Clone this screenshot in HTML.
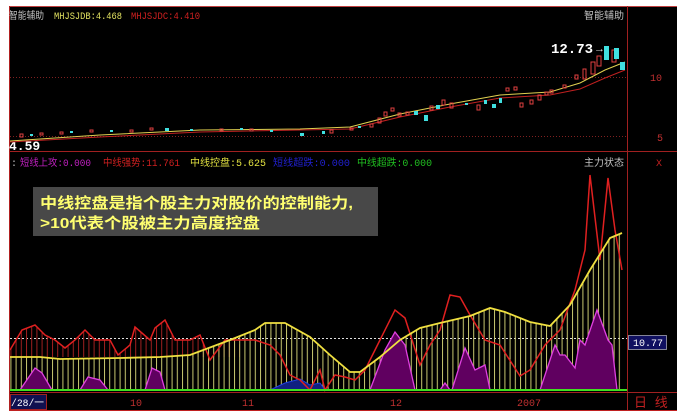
<!DOCTYPE html><html><head><meta charset="utf-8"><style>
body{margin:0;width:677px;height:417px;background:#fff;overflow:hidden;font-family:"Liberation Sans","Noto Sans CJK SC",sans-serif}
</style></head><body>
<svg width="677" height="417" xmlns="http://www.w3.org/2000/svg" style="position:absolute;left:0;top:0">
<defs><pattern id="vs" width="5.2" height="10" patternUnits="userSpaceOnUse"><rect x="0" y="0" width="1" height="10" fill="#c8c870"/></pattern>
<pattern id="rs" width="5.2" height="10" patternUnits="userSpaceOnUse"><rect x="0" y="0" width="1" height="10" fill="#a02020"/></pattern></defs>
<rect x="0" y="0" width="677" height="417" fill="#fff"/>
<rect x="9" y="6" width="668" height="405" fill="#000"/>
<line x1="9" y1="6.5" x2="677" y2="6.5" stroke="#c04040"/>
<line x1="9.5" y1="6" x2="9.5" y2="411" stroke="#b02020"/>
<line x1="627.5" y1="6" x2="627.5" y2="411" stroke="#a02020"/>
<line x1="9" y1="151.5" x2="677" y2="151.5" stroke="#a02020"/>
<line x1="9" y1="392.5" x2="677" y2="392.5" stroke="#a02020"/>
<line x1="9" y1="410.5" x2="677" y2="410.5" stroke="#c02020"/>
<line x1="10" y1="77.5" x2="627" y2="77.5" stroke="#802020" stroke-dasharray="1,2"/>
<line x1="10" y1="136.5" x2="627" y2="136.5" stroke="#802020" stroke-dasharray="1,2"/>
<g font-size="10" font-family="Liberation Mono,Noto Sans CJK SC,monospace" lengthAdjust="spacingAndGlyphs">
<text x="9" y="19" fill="#c0c0c0" textLength="35" lengthAdjust="spacingAndGlyphs">智能辅助</text>
<text x="54" y="19" fill="#e0e060" textLength="68" lengthAdjust="spacingAndGlyphs">MHJSJDB:4.468</text>
<text x="131" y="19" fill="#d02020" textLength="69" lengthAdjust="spacingAndGlyphs">MHJSJDC:4.410</text>
<text x="584" y="19" fill="#c0c0c0" textLength="40" lengthAdjust="spacingAndGlyphs">智能辅助</text>
<text x="650" y="81" fill="#c03030">10</text>
<text x="657" y="141" fill="#c03030">5</text>
<text x="11" y="166" fill="#c0c0c0">:</text>
<text x="20" y="166" fill="#c020c0" textLength="71" lengthAdjust="spacingAndGlyphs">短线上攻:0.000</text>
<text x="103" y="166" fill="#d02020" textLength="77" lengthAdjust="spacingAndGlyphs">中线强势:11.761</text>
<text x="190" y="166" fill="#e0e040" textLength="76" lengthAdjust="spacingAndGlyphs">中线控盘:5.625</text>
<text x="273" y="166" fill="#2020d0" textLength="77" lengthAdjust="spacingAndGlyphs">短线超跌:0.000</text>
<text x="357" y="166" fill="#20c020" textLength="75" lengthAdjust="spacingAndGlyphs">中线超跌:0.000</text>
<text x="584" y="166" fill="#c0c0c0" textLength="40" lengthAdjust="spacingAndGlyphs">主力状态</text>
<text x="656" y="166" fill="#c02020">X</text>
</g>
<text x="551" y="53" fill="#fff" font-size="14" font-family="Liberation Mono,monospace" font-weight="bold">12.73</text>
<text x="594" y="52" fill="#ddd" font-size="11">→</text>
<text x="9" y="150" fill="#fff" font-size="13" font-family="Liberation Mono,monospace" font-weight="bold">4.59</text>
<polyline fill="none" stroke="#e0d050" stroke-width="1" points="10,141 100,135 200,130 300,129 350,127 400,114 450,104 500,95 550,92 580,83 605,70 625,62"/>
<polyline fill="none" stroke="#c02020" stroke-width="1" points="10,142 100,137 200,132 300,130 350,129 400,117 450,107 500,98 550,95 580,89 605,78 625,70"/>
<g fill="none" stroke="#e04040">
<rect x="20" y="134" width="3" height="3"/><rect x="40" y="133" width="3" height="2"/><rect x="60" y="132" width="3" height="2"/><rect x="90" y="130" width="3" height="2"/><rect x="130" y="130" width="3" height="2"/><rect x="150" y="128" width="3" height="2"/><rect x="220" y="129" width="3" height="2"/><rect x="250" y="129" width="3" height="2"/><rect x="330" y="130" width="3" height="3"/><rect x="350" y="128" width="3" height="2"/><rect x="370" y="124" width="3" height="3"/><rect x="378" y="118" width="3" height="5"/><rect x="384" y="112" width="3" height="4"/><rect x="391" y="108" width="3" height="3"/><rect x="398" y="113" width="3" height="3"/><rect x="406" y="112" width="3" height="3"/><rect x="430" y="106" width="3" height="4"/><rect x="442" y="100" width="3" height="5"/><rect x="450" y="103" width="3" height="5"/><rect x="477" y="105" width="3" height="5"/><rect x="520" y="103" width="3" height="4"/><rect x="530" y="100" width="3" height="4"/><rect x="538" y="95" width="3" height="5"/><rect x="545" y="92" width="3" height="3"/><rect x="550" y="90" width="3" height="3"/><rect x="563" y="85" width="3" height="3"/><rect x="575" y="75" width="3" height="4"/><rect x="583" y="69" width="3" height="10"/><rect x="591" y="62" width="4" height="12"/><rect x="597" y="56" width="4" height="10"/><rect x="612" y="50" width="4" height="12"/><rect x="506" y="88" width="3" height="3"/><rect x="514" y="87" width="3" height="3"/>
</g>
<g fill="#40e0e0">
<rect x="30" y="134" width="3" height="2"/><rect x="70" y="131" width="3" height="2"/><rect x="110" y="130" width="3" height="2"/><rect x="165" y="128" width="4" height="3"/><rect x="190" y="129" width="3" height="2"/><rect x="240" y="128" width="3" height="2"/><rect x="270" y="130" width="3" height="2"/><rect x="300" y="133" width="4" height="3"/><rect x="322" y="131" width="3" height="3"/><rect x="358" y="126" width="3" height="2"/><rect x="414" y="111" width="4" height="4"/><rect x="424" y="115" width="4" height="6"/><rect x="436" y="105" width="4" height="4"/><rect x="465" y="103" width="3" height="2"/><rect x="484" y="100" width="3" height="4"/><rect x="492" y="104" width="4" height="4"/><rect x="604" y="46" width="5" height="14"/><rect x="614" y="48" width="5" height="11"/><rect x="620" y="62" width="5" height="8"/><rect x="499" y="98" width="3" height="5"/>
</g>
<line x1="10" y1="338.5" x2="627" y2="338.5" stroke="#e0e0e0" stroke-dasharray="2,2"/>
<polygon fill="url(#rs)" points="10,357 10,350 22,330 35,325 45,335 55,340 65,348 75,340 85,330 95,340 110,340 118,355 130,345 135,327 150,340 155,328 165,320 175,340 190,340 200,335 210,360 225,340 235,340 240,345 240,357"/>
<polygon fill="url(#vs)" points="10,390 10,357 40,357 60,359 120,358 160,357 190,355 230,340 255,330 265,323 285,323 310,337 330,355 350,372 360,372 380,357 400,340 420,328 440,323 470,316 490,308 505,312 530,322 550,326 570,305 590,270 610,238 622,233 622,390"/>
<g fill="#600060" stroke="#e040e0" stroke-width="1.3">
<polyline points="20,390 35,368 42,373 52,390"/><polyline points="80,390 88,377 100,380 108,390"/><polyline points="145,390 152,368 160,372 165,390"/><polyline points="370,390 385,350 395,332 405,345 415,390"/><polyline points="440,390 445,383 450,390"/><polyline points="452,390 465,348 475,370 485,365 490,390"/><polyline points="540,390 555,345 560,355 565,355 575,368 580,340 585,345 597,310 608,340 612,345 617,390"/>
</g>
<polyline fill="#102080" stroke="#2040e0" points="270,390 285,383 300,379 310,385 320,383 325,390"/>
<polyline fill="none" stroke="#e02020" stroke-width="1.5" points="10,350 22,330 35,325 45,335 55,340 65,348 75,340 85,330 95,340 110,340 118,355 130,345 135,327 150,340 155,328 165,320 175,340 190,340 200,335 210,360 225,340 235,340 255,340 270,345 280,355 290,375 300,380 310,390 320,370 325,390 335,375 345,377 355,380 365,370 380,340 395,310 405,318 420,365 430,345 440,330 450,295 460,297 470,315 485,340 500,345 520,376 530,370 545,345 560,330 575,290 585,250 590,175 600,260 608,178 615,230 622,270"/>
<polyline fill="none" stroke="#f0e040" stroke-width="1.8" points="10,357 40,357 60,359 120,358 160,357 190,355 230,340 255,330 265,323 285,323 310,337 330,355 350,372 360,372 380,357 400,340 420,328 440,323 470,316 490,308 505,312 530,322 550,326 570,305 590,270 610,238 622,233"/>
<line x1="10" y1="390" x2="627" y2="390" stroke="#40e020" stroke-width="2"/>
<rect x="628.5" y="335.5" width="38" height="14" fill="#101060" stroke="#fff" stroke-width="0.5"/>
<text x="633" y="346" fill="#fff" font-size="10" font-family="Liberation Mono,monospace">10.77</text>
<rect x="10.5" y="394.5" width="36" height="15" fill="#101050" stroke="#a02020"/>
<g font-size="10" font-family="Liberation Mono,Noto Sans CJK SC,monospace">
<text x="11" y="406" fill="#fff" textLength="33" lengthAdjust="spacingAndGlyphs">/28/一</text>
<text x="130" y="406" fill="#c03030">10</text>
<text x="242" y="406" fill="#c03030">11</text>
<text x="390" y="406" fill="#c03030">12</text>
<text x="517" y="406" fill="#c03030">2007</text>
<text x="634" y="407" fill="#c02020" font-size="13">日 线</text>
</g>
<rect x="33" y="187" width="345" height="49" fill="#484848"/>
<g fill="#ffff70" font-size="15" font-weight="bold" font-family="Liberation Sans,Noto Sans CJK SC,sans-serif">
<text x="40" y="208" textLength="313" lengthAdjust="spacingAndGlyphs">中线控盘是指个股主力对股价的控制能力,</text>
<text x="40" y="228" textLength="220" lengthAdjust="spacingAndGlyphs">&gt;10代表个股被主力高度控盘</text>
</g>
</svg>
</body></html>
